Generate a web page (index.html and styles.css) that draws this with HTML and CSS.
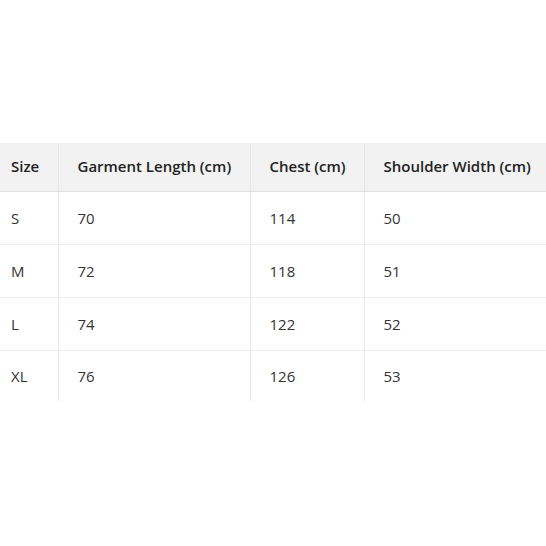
FILE: index.html
```html
<!DOCTYPE html>
<html>
<head>
<meta charset="utf-8">
<link rel="stylesheet" href="styles.css">
</head>
<body>
<div class="page">
  <table class="size-table">
    <colgroup>
      <col class="c1"><col class="c2"><col class="c3"><col class="c4">
    </colgroup>
    <thead>
      <tr><th>Size</th><th>Garment Length (cm)</th><th>Chest (cm)</th><th>Shoulder Width (cm)</th></tr>
    </thead>
    <tbody>
      <tr><td>S</td><td>70</td><td>114</td><td>50</td></tr>
      <tr><td>M</td><td>72</td><td>118</td><td>51</td></tr>
      <tr><td>L</td><td>74</td><td>122</td><td>52</td></tr>
      <tr><td>XL</td><td>76</td><td>126</td><td>53</td></tr>
    </tbody>
  </table>
</div>
</body>
</html>
```

FILE: styles.css
```css
html, body {
  margin: 0;
  padding: 0;
  background: #fff;
}
.page {
  width: 546px;
  height: 546px;
  display: flex;
  align-items: center;
  overflow: hidden;
}
.size-table {
  border-collapse: collapse;
  table-layout: fixed;
  width: 546px;
  margin-top: -2px;
  font-family: "Open Sans", "Noto Sans", sans-serif;
  font-size: 15px;
  color: #333;
}
.c1 { width: 58px; }
.c2 { width: 192px; }
.c3 { width: 114px; }
.c4 { width: 182px; }
.size-table th,
.size-table td {
  text-align: left;
  padding: 0 0 0 19px;
  border-left: 1px solid #e6e6e6;
  white-space: nowrap;
}
.size-table th:first-child,
.size-table td:first-child {
  border-left: none;
  padding-left: 11px;
}
.size-table th {
  height: 46px;
  padding-bottom: 2px;
  background: #f2f2f2;
  font-weight: 600;
  color: #222;
  border-bottom: 1px solid #e0e0e0;
}
.size-table td {
  height: 52px;
  border-bottom: 1px solid #ececec;
}
.size-table tbody tr:last-child td {
  border-bottom: none;
  height: 50px;
}
```
